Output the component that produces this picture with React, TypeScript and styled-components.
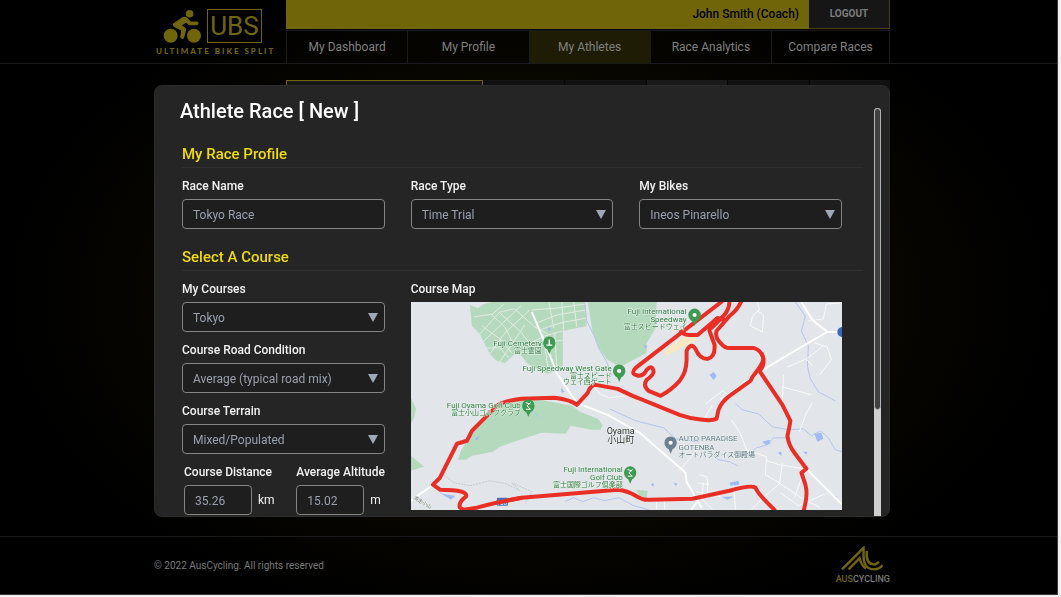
import React from 'react';
import styled, { createGlobalStyle } from 'styled-components';

const GlobalStyle = createGlobalStyle`
  * { box-sizing: border-box; }
  body {
    margin: 0;
    background: #f0eeee;
    font-family: Roboto, "Noto Sans CJK JP", sans-serif;
    -webkit-font-smoothing: antialiased;
  }
  h1, h2, p { margin: 0; }
`;

const gold = '#716509';

const Page = styled.div`
  display: flex;
  flex-direction: column;
  min-height: calc(100vh - 2px);
  margin: 0 3px 2px 0;
  background: radial-gradient(ellipse 520px 330px at 50% 50%, #0f0e00 0%, #080700 65%, #000 100%);
  border-right: 1px solid #3a3a3a;
  border-bottom: 1px solid #3a3a3a;
`;

const Band = styled.div`
  padding-right: 13px;
`;

const Container = styled.div`
  display: flex;
  width: 100%;
  max-width: 736px;
  margin: 0 auto;
`;

const Header = styled(Band).attrs({ as: 'header' })`
  border-bottom: 1px solid #1b1b1b;
`;

const Brand = styled.a`
  display: flex;
  flex-direction: column;
  flex: 0 0 132px;
  padding: 9px 0 0 2px;
  color: ${gold};
  text-decoration: none;
`;

const BrandMark = styled.div`
  display: flex;
  gap: 6px;
  padding-left: 7px;
`;

const Initials = styled.span`
  display: flex;
  align-items: center;
  justify-content: center;
  width: 55px;
  height: 34px;
  border: 1px solid ${gold};
  font: 400 26px/32px Roboto, sans-serif;
`;

const Tagline = styled.span`
  margin-top: 3px;
  font: 900 8px/10px Lato, sans-serif;
  letter-spacing: 2px;
  white-space: nowrap;
`;

const HeaderMain = styled.div`
  flex: 1;
  min-width: 0;
`;

const UserBar = styled.div`
  display: flex;
  justify-content: flex-end;
  height: 29px;
  margin-bottom: 1px;
  background: ${gold};
`;

const UserName = styled.span`
  padding-right: 10px;
  color: #000;
  font-size: 12px;
  font-weight: 500;
  line-height: 28px;
`;

const Logout = styled.button`
  width: 81px;
  padding: 0;
  border: solid #4b430a;
  border-width: 0 1px 1px 0;
  background: #161616;
  color: #7d7d7d;
  font: 700 10px/28px Roboto, sans-serif;
`;

const Nav = styled.nav`
  display: grid;
  grid-template-columns: repeat(4, minmax(0, 1fr)) 118px;
  border-top: 1px solid #1b1b1b;
  border-right: 1px solid #1b1b1b;
`;

const NavLink = styled.a<{ $active?: boolean }>`
  border-left: 1px solid #1b1b1b;
  background: ${p => (p.$active ? '#1f1c06' : 'transparent')};
  color: #808080;
  font-size: 12px;
  line-height: 32px;
  text-align: center;
  text-decoration: none;
  white-space: nowrap;
`;

const Main = styled(Band).attrs({ as: 'main' })`
  flex: 1;
  padding-top: 16px;
`;

const Tabs = styled.div`
  display: grid;
  flex: 1;
  grid-template-columns: 197px repeat(5, minmax(0, 1fr));
  gap: 1px;
  margin-left: 132px;
`;

const Tab = styled.div<{ $tone: string; $outlined?: boolean }>`
  height: 24px;
  background: ${p => p.$tone};
  border: 1px solid ${p => (p.$outlined ? gold : p.$tone)};
`;

const Footer = styled(Band).attrs({ as: 'footer' })`
  border-top: 1px solid #1b1b1b;
`;

const FooterRow = styled(Container)`
  align-items: center;
  justify-content: space-between;
  height: 57px;
`;

const Copyright = styled.p`
  color: #7a7a7a;
  font-size: 10px;
  line-height: 16px;
`;

const Partner = styled.div`
  display: flex;
  flex-direction: column;
  align-items: center;
  gap: 2px;
  color: #7c7c7c;
  font: 500 9px/12px Roboto, sans-serif;

  b { color: ${gold}; font-weight: 500; }
`;

const Overlay = styled.div`
  position: fixed;
  inset: 0;
  padding: 85px 17px 80px 0;
`;

const Dialog = styled.section`
  position: relative;
  display: flex;
  flex-direction: column;
  width: 100%;
  max-width: 736px;
  max-height: calc(100vh - 165px);
  margin: 0 auto;
  overflow: hidden;
  border: 1px solid #2c2c2c;
  border-radius: 8px;
  background: #252525;
`;

const DialogTitle = styled.h1`
  padding: 13px 25px 0;
  color: #fff;
  font-size: 20px;
  font-weight: 500;
  line-height: 24px;
`;

const DialogBody = styled.form`
  padding: 21px 26px 24px 27px;
  overflow-y: auto;
  scrollbar-width: none;
`;

const SectionTitle = styled.h2`
  margin-bottom: 10px;
  padding-bottom: 3px;
  border-bottom: 1px solid #303030;
  color: #f0dc0a;
  font-size: 15px;
  font-weight: 500;
  line-height: 20px;
`;

const Grid = styled.div`
  display: grid;
  grid-template-columns: repeat(3, minmax(0, 1fr));
  gap: 26px;
  margin: 0 21px 18px 0;
`;

const Stack = styled.div`
  display: flex;
  flex-direction: column;
  gap: 10px;
`;

const FieldBox = styled.div`
  display: flex;
  flex-direction: column;
  gap: 5px;
  min-width: 0;
`;

const Label = styled.label`
  color: #f2f2f2;
  font-size: 12px;
  font-weight: 500;
  line-height: 16px;
  white-space: nowrap;
`;

const Input = styled.input`
  width: 100%;
  height: 30px;
  padding: 1px 10px 0;
  border: 1px solid #858585;
  border-radius: 4px;
  background: #1e1e1e;
  color: #9aa0ae;
  font: 400 12px/16px Roboto, sans-serif;
`;

const SelectShell = styled.div`
  position: relative;

  svg {
    position: absolute;
    top: 11px;
    right: 7px;
    pointer-events: none;
  }
`;

const Select = styled(Input).attrs({ as: 'select' })`
  appearance: none;
`;

const Measures = styled.div`
  display: grid;
  grid-template-columns: repeat(2, minmax(0, 1fr));
  gap: 24px;
  padding-left: 2px;
`;

const Measured = styled.div`
  display: flex;
  align-items: center;
  gap: 6px;
  color: #f2f2f2;
  font-size: 12px;

  input { width: 68px; flex: none; }
`;

const MapField = styled(FieldBox)`
  grid-column: span 2;
`;

const MapLabel = styled(Label).attrs({ as: 'span' })``;

const MapSvg = styled.svg`
  display: block;
  width: 100%;
  height: auto;
  background: #e2e5e9;
  font-family: Roboto, "Noto Sans CJK JP", sans-serif;
`;

const ScrollTrack = styled.div`
  position: absolute;
  top: 22px;
  right: 8px;
  bottom: 0;
  width: 7px;
  border-radius: 4px 4px 0 0;
  background: #cfcfcf;
`;

const ScrollThumb = styled.div`
  height: 74%;
  border: 1px solid #b4b4b4;
  border-radius: 4px;
  background: #404040;
`;

function SelectField({ id, label, value }: { id: string; label: string; value: string }) {
  return (
    <FieldBox>
      <Label htmlFor={id}>{label}</Label>
      <SelectShell>
        <Select id={id}><option>{value}</option></Select>
        <svg width="10" height="9" viewBox="0 0 10 9" aria-hidden="true"><path d="M0 0H10L5 9Z" fill="#9fa8b8" /></svg>
      </SelectShell>
    </FieldBox>
  );
}

function MeasureField({ id, label, value, unit }: { id: string; label: string; value: string; unit: string }) {
  return (
    <FieldBox>
      <Label htmlFor={id}>{label}</Label>
      <Measured><Input id={id} defaultValue={value} /><span>{unit}</span></Measured>
    </FieldBox>
  );
}

function Cyclist() {
  return (
    <svg width="38" height="34" viewBox="163 9 38 34" aria-hidden="true">
      <g fill={gold}>
        <circle cx="170.7" cy="35.8" r="7" />
        <circle cx="194" cy="35.8" r="7" />
        <circle cx="189.6" cy="13.8" r="3.8" />
        <path d="M173.4 23.2 182.5 17.2Q186 15.6 188 18.6L190.6 21.6H196.6Q198.8 21.8 198.6 23.6 198.4 25.2 196.6 25.2H190Q188.6 25.2 187.6 24L186.2 22.4 181.8 25.4 185 27.6Q186.4 28.8 186 30.6L184.2 37.6Q183.4 39.4 181.6 38.8 180 38.2 180.2 36.4L181.2 30.6 175 27.4Q172 25.4 173.4 23.2Z" />
      </g>
    </svg>
  );
}

function Peaks() {
  return (
    <svg width="43" height="25" viewBox="843 547 43 25" aria-hidden="true">
      <g fill="none" stroke={gold} strokeWidth="2.4">
        <path d="M844 570.4 865.6 548.8V554Q864.6 569.8 875.5 570.4 882 570.4 884.4 566.2" />
        <path d="M850.6 570.4 861.6 559.2Q863.4 566.4 868 569.6" />
        <path d="M868.8 552Q867.6 564.6 875.6 565.4 879 565.4 880.6 562.6" />
      </g>
    </svg>
  );
}

function Pin({ x, y, color = '#3f9a52', glyph = 'dot' }: { x: number; y: number; color?: string; glyph?: string }) {
  return (
    <g transform={`translate(${x} ${y})`}>
      <path d="M0 10L-2 5.6Q-6.2 3-6.2-1.2A6.2 6.2 0 0 1 6.2-1.2Q6.2 3 2 5.6Z" fill={color} />
      {glyph === 'dot' && <circle cy="-1" r="2.1" fill="#fff" />}
      {glyph === 'grave' && <path d="M0-4.4V1M-3 1.2H3" stroke="#fff" strokeWidth="1.4" />}
      {glyph === 'golf' && <path d="M-2.6-4.2 2-2.8M2.4-4.4-1.2-1 1.8 2.2M-2.4 2.4H2.4" stroke="#fff" strokeWidth="1" fill="none" />}
    </g>
  );
}

function CourseMap() {
  return (
    <MapSvg viewBox="411 301 432 208" role="img" aria-label="Course Map">
      <g fill="#b5d9bd">
        <path d="M470 304 478 307 484 303 492 301H585L587 325 563 330V365L548 373 528 363 518 350 505 362 497 360 490 353 485 343 480 333 472 325Z" />
        <path d="M588 301H657L656 327 647 342V352L620 366 607 358 598 345 593 331Z" />
        <path d="M458 459 461 450 472 432 497 405 522 398 545 400 572 405 580 411 598 418 603 424 601 429 592 429 571 425 566 433 542 432 520 439 500 446 493 451 472 455 466 459Z" />
        <path d="M411 397 416 408 414 417 411 423ZM411 455 424 466 411 470ZM636 489 648 490 647 497 640 495Z" />
      </g>
      <g fill="none" stroke="#e3ece4" strokeWidth="1">
        <path d="M474 316 493 313 504 303M480 333 500 311 514 308M484 340 521 305M490 353 505 332 530 309M500 361 525 324M492 314 505 326 517 350M482 325 500 338 512 352M500 312 520 330 528 340M515 308 535 326 548 333M525 345 545 335 563 330M529 352 548 342 563 339M537 322 557 314 586 309M540 329 560 322 587 317M549 301 554 327M562 301 564 330M574 301 577 326M532 309 558 307 586 303M543 333 549 371M555 332 557 367M487 347 500 347 509 357" />
      </g>
      <g fill="none" stroke="#b4c5ec" strokeWidth="1">
        <path d="M585 301 587 320 594 334 599 347 607 361 612 375M796 301 806 315 802 330 809 345 808 365 811 378 819 391 836 400M736 403 743 409 759 413 773 426 789 429 804 428 812 435 821 430 829 437 836 449 843 451M788 437 774 437 768 444 757 447 748 455M532 410 540 417M565 501 574 497 583 501 594 497 605 500 619 497 634 505 649 509M440 492 449 497 455 496M610 408 636 420 664 427 676 438 699 441M705 447 719 459 730 461 738 465" />
      </g>
      <g fill="#9fbaf4">
        <path d="M710 374 714 371 717 375 714 379ZM815 433 822 432 824 438 818 441ZM763 441 770 439 771 443 766 444ZM730 482 739 480 740 484 731 485ZM722 496 734 496 728 499ZM760 366 763 366 763 369ZM778 452 782 451 782 455ZM804 451 808 451 807 454ZM651 484 654 482 654 486ZM644 344 648 345 646 348ZM548 326 551 328 549 331ZM561 387 565 391 562 392ZM475 438 480 435 477 440ZM674 482 678 483 676 485ZM834 495 838 496 836 498ZM442 493 455 495 451 499Z" />
      </g>
      <g fill="none" stroke="#fafafa" strokeWidth="1">
        <path d="M758 301 760 309 753 315 751 325 763 331 764 314 757 309M784 374 783 402M788 366 807 358 824 345M815 342 828 346 832 359 820 374M807 358 813 365M809 320 824 318M824 318 827 303 842 302M783 386 812 394M593 384 600 393 609 397 626 395M706 403 723 390 731 396M704 419 713 404M732 419 741 433 747 449 767 456 766 474 781 483 803 498 821 507M767 460 780 464 805 468M783 462 780 483 765 496 752 509M700 474 707 476 709 484 698 482M704 482 702 498 713 509M708 480V495M734 485 736 509M680 470 695 452 702 442M800 431 807 412 813 402M803 475 795 497M657 501V509M665 499V509M697 491 721 496M781 492 799 505 826 493" />
      </g>
      <g fill="none" stroke="#fff" strokeWidth="2">
        <path d="M532 311 540 330 549 352 558 374 577 402 608 414 640 432 677 464 686 472 687 481 702 507M802 301 813 319 828 331 843 331M828 331 785 356 762 370 721 399M807 468 843 504M411 500 433 484M692 509 699 499" />
      </g>
      <path d="M441 472 454 482 470 485 490 480 506 483 520 490 512 482 532 491 526 502" fill="none" stroke="#c4c8cc" strokeDasharray="2 1" />
      <path d="M664 350 682 337 693 333 697 339 667 355Z" fill="#f8e9c4" />
      <g fill="none" stroke="#e92f25" strokeWidth="4" strokeLinejoin="round">
        <path d="M723 300 636 367Q631 372 636 374 643 377 647 369 653 363 654 371 653 375 647 379 643 385 649 390L661 395Q672 389 680 380 687 371 687 359V350Q691 341 696 348 700 358 708 358 716 356 715 344L710 330Q709 325 718 317" />
        <path d="M681 329Q684 335 691 334H698L718 317 725 319" />
        <path d="M730 300Q730 309 723 316L711 328" />
        <path d="M742 300Q738 309 730 315L717 330Q715 337 722 343 726 348 732 347H754Q762 349 764 358 764 362 753 376L751 380 730 395Q722 401 719 409L717 418Q713 420 703 419 691 418 680 414L633 395 618 388 596 384Q591 384 588 392L577 404Q571 399 555 397L522 398Q499 401 495 407L472 430 467 440 457 443 440 477 433 484 440 489Q469 489 466 496 458 502 460 507L464 509 477 507Q498 501 522 497L618 489Q628 490 636 495 644 500 650 499L693 498 730 490Q752 484 756 487 759 494 776 510" />
        <path d="M762 352Q767 363 760 370L783 404 791 420Q790 427 788 435 789 444 795 452L807 468 802 472 806 484Q809 494 804 511" />
      </g>
      <path d="M843 326A5 5 0 0 0 843 336Z" fill="#3768bd" />
      <rect x="497" y="497" width="11" height="8" rx="1" fill="#4470bd" />
      <text x="502" y="504" fontSize="6" fill="#fff" textAnchor="middle">138</text>
      <path d="M497 502 522 497" stroke="#e92f25" strokeWidth="4" />
      <Pin x={549.5} y={343} glyph="grave" />
      <Pin x={619.5} y={371} />
      <Pin x={695} y={315} />
      <Pin x={528.5} y={406} glyph="golf" />
      <Pin x={630.5} y={473} glyph="golf" />
      <Pin x={671} y={443} color="#6b818e" />
      <g stroke="#eef3ee" strokeWidth="1" paintOrder="stroke" strokeLinejoin="round" fill="#2f7d43" fontSize="8" textAnchor="end">
        <text x="542" y="345">Fuji Cemetery</text>
        <text x="542" y="352" fontSize="7">富士霊園</text>
        <text x="612" y="370">Fuji Speedway West Gate</text>
        <text x="612" y="377" fontSize="7">富士スピード</text>
        <text x="612" y="383" fontSize="7">ウェイ西ゲート</text>
        <text x="687" y="313">Fuji International</text>
        <text x="687" y="321">Speedway</text>
        <text x="687" y="328" fontSize="7">富士スピードウェイ</text>
        <text x="521" y="407">Fuji Oyama Golf Club</text>
        <text x="521" y="414" fontSize="7">富士小山ゴルフクラブ</text>
        <text x="623" y="471">Fuji International</text>
        <text x="623" y="479">Golf Club</text>
        <text x="623" y="486" fontSize="7">富士国際ゴルフ倶楽部</text>
        <g fill="#607988" textAnchor="start">
          <text x="679" y="440">AUTO PARADISE</text>
          <text x="679" y="449">GOTENBA</text>
          <text x="679" y="456" fontSize="7">オートパラダイス御殿場</text>
        </g>
        <g fill="#2e3134" textAnchor="middle">
          <text x="621" y="433" fontSize="9">Oyama</text>
          <text x="621" y="442" fontSize="9">小山町</text>
        </g>
        <text x="413" y="498" fill="#6e7276" fontSize="5" textAnchor="start" transform="rotate(30 413 498)">須走小山</text>
      </g>
    </MapSvg>
  );
}

export default function App() {
  return (
    <>
      <GlobalStyle />
      <Page>
        <Header>
          <Container>
            <Brand href="#">
              <BrandMark><Cyclist /><Initials>UBS</Initials></BrandMark>
              <Tagline>ULTIMATE BIKE SPLIT</Tagline>
            </Brand>
            <HeaderMain>
              <UserBar>
                <UserName>John Smith (Coach)</UserName>
                <Logout type="button">LOGOUT</Logout>
              </UserBar>
              <Nav>
                {['My Dashboard', 'My Profile', 'My Athletes', 'Race Analytics', 'Compare Races'].map(item => (
                  <NavLink key={item} href="#" $active={item === 'My Athletes'}>{item}</NavLink>
                ))}
              </Nav>
            </HeaderMain>
          </Container>
        </Header>
        <Main>
          <Container>
            <Tabs>
              <Tab $tone="#171717" $outlined />
              <Tab $tone="#111" />
              <Tab $tone="#111" />
              <Tab $tone="#1a1a1a" />
              <Tab $tone="#111" />
              <Tab $tone="#111" />
            </Tabs>
          </Container>
        </Main>
        <Footer>
          <FooterRow>
            <Copyright>© 2022 AusCycling. All rights reserved</Copyright>
            <Partner><Peaks /><span><b>AUS</b>CYCLING</span></Partner>
          </FooterRow>
        </Footer>
      </Page>
      <Overlay>
        <Dialog role="dialog" aria-labelledby="dialog-title">
          <DialogTitle id="dialog-title">Athlete Race [ New ]</DialogTitle>
          <DialogBody>
            <SectionTitle>My Race Profile</SectionTitle>
            <Grid>
              <FieldBox>
                <Label htmlFor="race-name">Race Name</Label>
                <Input id="race-name" defaultValue="Tokyo Race" />
              </FieldBox>
              <SelectField id="race-type" label="Race Type" value="Time Trial" />
              <SelectField id="bikes" label="My Bikes" value="Ineos Pinarello" />
            </Grid>
            <SectionTitle>Select A Course</SectionTitle>
            <Grid>
              <Stack>
                <SelectField id="courses" label="My Courses" value="Tokyo" />
                <SelectField id="road" label="Course Road Condition" value="Average (typical road mix)" />
                <SelectField id="terrain" label="Course Terrain" value="Mixed/Populated" />
                <Measures>
                  <MeasureField id="distance" label="Course Distance" value="35.26" unit="km" />
                  <MeasureField id="altitude" label="Average Altitude" value="15.02" unit="m" />
                </Measures>
              </Stack>
              <MapField>
                <MapLabel>Course Map</MapLabel>
                <CourseMap />
              </MapField>
            </Grid>
          </DialogBody>
          <ScrollTrack><ScrollThumb /></ScrollTrack>
        </Dialog>
      </Overlay>
    </>
  );
}
